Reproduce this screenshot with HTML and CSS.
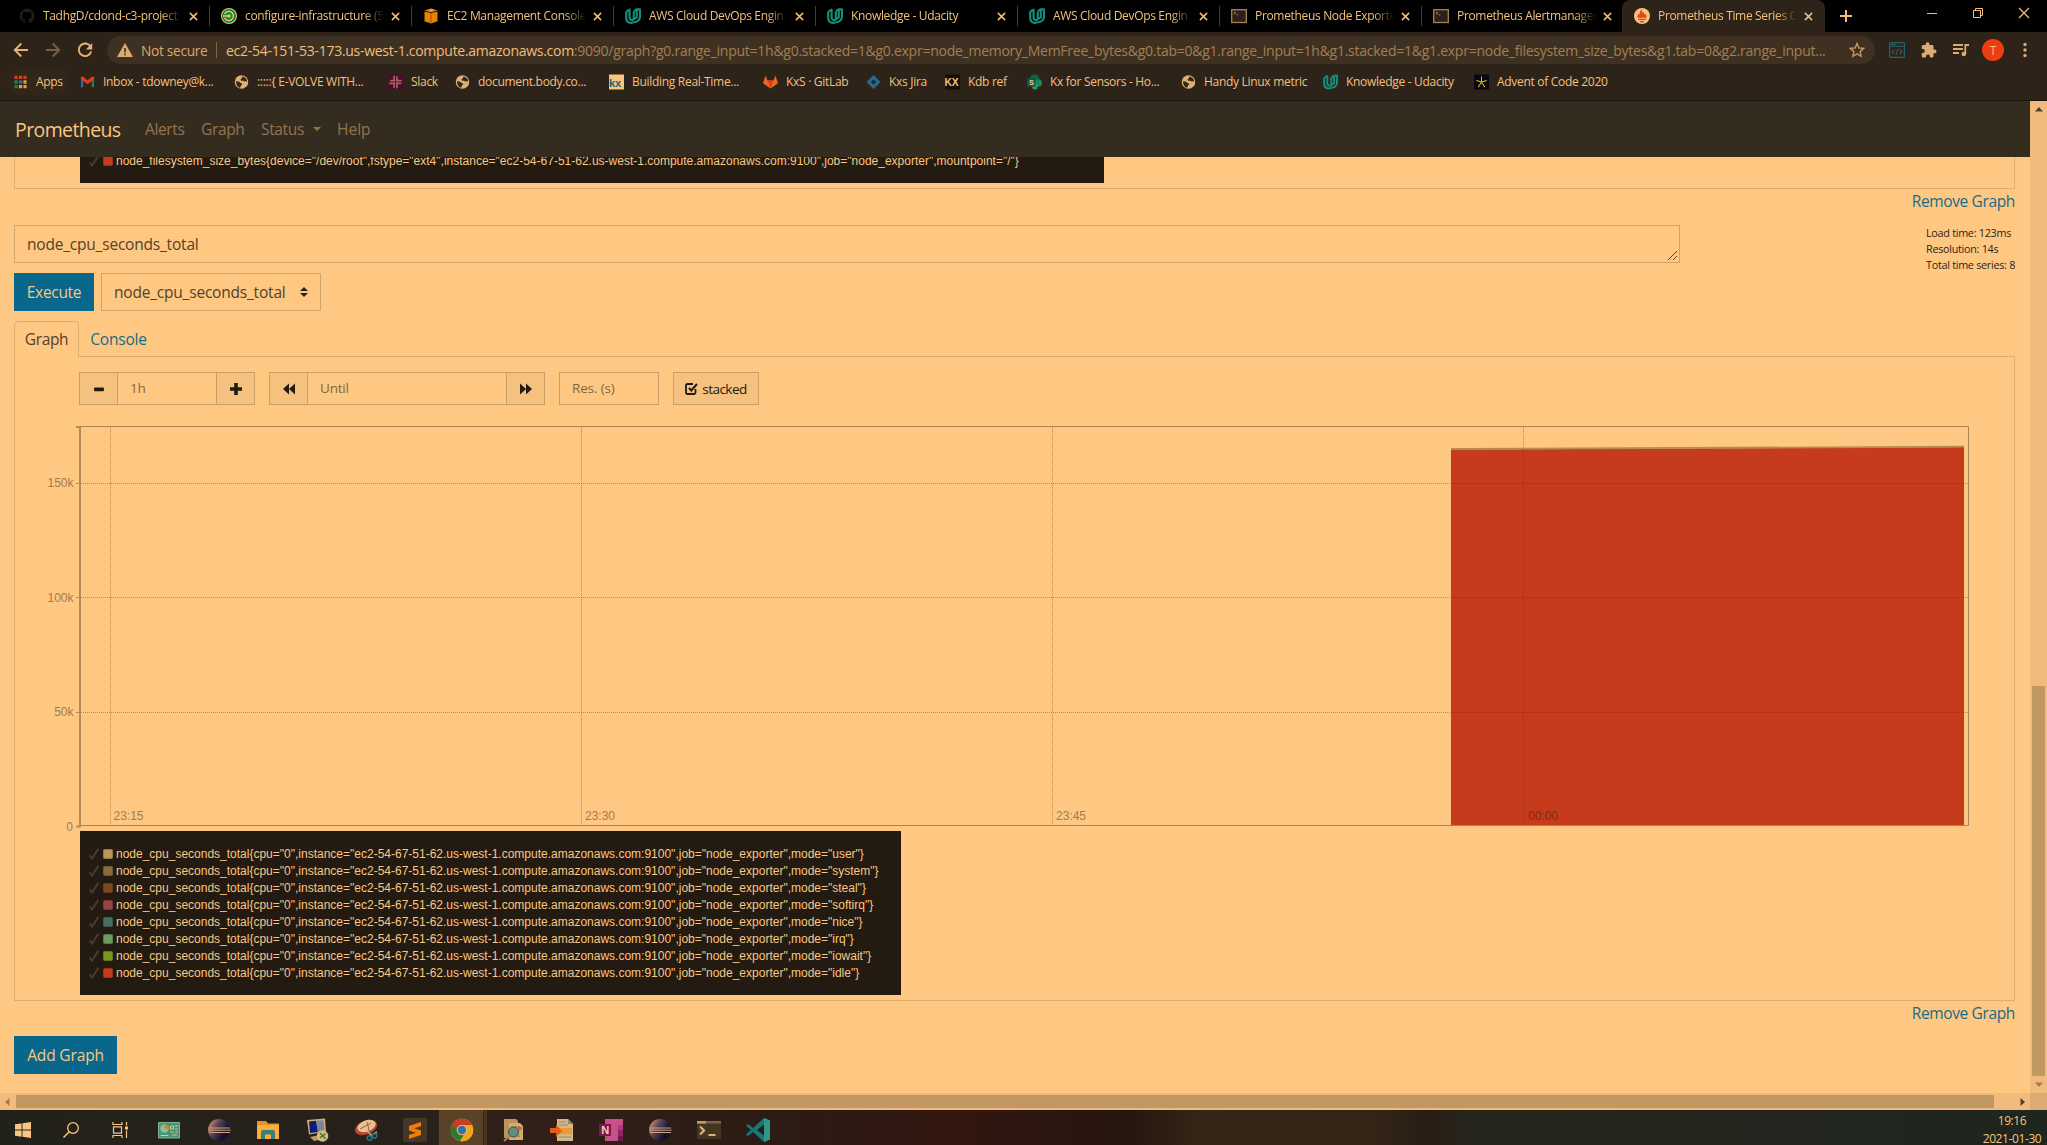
FILE: index.html
```html
<!DOCTYPE html>
<html lang="en">
<head>
<meta charset="utf-8">
<title>Prometheus Time Series Collection and Processing Server</title>
<link rel="stylesheet" href="styles.css">
</head>
<body>
<svg class="defs" width="0" height="0" aria-hidden="true">
  <symbol id="udacity" viewBox="0 0 16 16"><g fill="none" stroke="#11917c" stroke-width="2.1" stroke-linejoin="round"><path d="M1.2 3.6 4.6 1.6V9.6c0 3 3.4 3 4.4 1.4"/><path d="M1.2 3.6V10c0 4.400 4 5.800 7.200 4.200"/><path d="M8.800 3.600 11.200 1.400H15V8.400c0 3.600-3 6-6.600 5.800"/><path d="M8.800 3.400V11l3-1.600V2"/></g></symbol>
  <symbol id="globe" viewBox="0 0 16 16"><circle cx="8" cy="8" r="7.200" fill="#e0b073"/><path d="M2.200 6.800c1.600.9 3.200.2 4.200 1.600.5.900 2.200.5 2.300 1.800.1 1.100-1.400 1.300-1.600 2.300-.1.700-.4 1.400-.9 1.600C3.600 13.200 1.800 10.300 2.200 6.800zM8.200 2.200c.9.3 1 .9.300 1.600-.8.700-1.700.6-1.400 1.700.4 1 1.900.2 2.600 1.100.6.800 1.600.9 2.500.7.900-.1 1.500.3 1.700.9.200-3.600-2.300-6-5.700-6z" fill="#33271b"/></symbol>
  <symbol id="close" viewBox="0 0 10 10"><path d="M1 1l8 8M9 1L1 9" fill="none" stroke="#f0bd7b" stroke-width="1.700"/></symbol>
  <symbol id="term" viewBox="0 0 16 16"><rect x=".7" y="1.700" width="14.600" height="12.800" fill="#2b2118" stroke="#a78355" stroke-width="1.300"/><path d="M3 4l1.800 1L3 6M5.400 6.800h2" fill="none" stroke="#a78355" stroke-width=".9"/></symbol>
  <symbol id="check" viewBox="0 0 10 12"><path d="M.5 7.300 3 10.600 9.400.8" fill="none" stroke="#4b3b27" stroke-width="2"/></symbol>
  <symbol id="eclipse" viewBox="0 0 24 24"><defs><linearGradient id="ecl" x1="0" y1=".2" x2="1" y2=".8"><stop offset="0" stop-color="#d79365"/><stop offset=".35" stop-color="#59425a"/><stop offset=".75" stop-color="#15102e"/></linearGradient></defs><circle cx="12" cy="12" r="11" fill="url(#ecl)"/><path d="M2 10h21M1.500 12.200h22M2 14.500h21" stroke="#cfa783" stroke-width="1"/></symbol>
</svg>

<header class="chrome">
  <div class="tabs">
    <div class="tab"><svg class="fav" viewBox="0 0 16 16"><path d="M8 .6a7.400 7.400 0 0 0-2.300 14.400c.4.100.5-.2.500-.4v-1.400c-2 .4-2.500-.9-2.700-1.300-.2-.5-.6-.8-.9-1 .7-.3 1.300.1 1.700.7.500.8 1.200.7 1.900.5.1-.5.300-.8.500-1-1.700-.2-3.400-.9-3.400-3.600 0-.8.300-1.400.8-1.900-.1-.5-.3-1.200.1-2 .7-.1 1.500.4 2 .8 1.200-.3 2.400-.3 3.600 0 .6-.4 1.300-.8 2-.8.300.8.200 1.500.1 2 .5.500.8 1.200.8 1.900 0 2.700-1.700 3.400-3.400 3.600.3.300.5.7.5 1.400v2.100c0 .2.200.5.600.4A7.400 7.400 0 0 0 8 .6z" fill="#211d18"/></svg><span class="ttl">TadhgD/cdond-c3-project</span><svg class="x"><use href="#close"/></svg></div>
    <div class="tab"><svg class="fav" viewBox="0 0 16 16"><circle cx="8" cy="8" r="8" fill="#e9c07f"/><circle cx="8" cy="8" r="7" fill="#16872f"/><path d="M3.600 6.200A4.600 4.600 0 1 1 3.600 9.800M2 8h6" fill="none" stroke="#e9c07f" stroke-width="1.400"/><circle cx="8" cy="8" r="1.700" fill="#e9c07f"/></svg><span class="ttl">configure-infrastructure (5</span><svg class="x"><use href="#close"/></svg></div>
    <div class="tab"><svg class="fav" viewBox="0 0 16 16"><path d="M1.500 3.500 8 5v10.500L1.500 13.300zM14.500 3.500 8 5v10.500l6.500-2.200z" fill="#ea8206"/><path d="M1.500 2.600 8 .4l6.500 2.200L8 4.200z" fill="#ef9722"/><path d="M8 5v10.500M4.600 1.500v3M11.400 1.500v3" stroke="#8d4804" stroke-width=".8"/></svg><span class="ttl">EC2 Management Console</span><svg class="x"><use href="#close"/></svg></div>
    <div class="tab"><svg class="fav"><use href="#udacity"/></svg><span class="ttl">AWS Cloud DevOps Engin</span><svg class="x"><use href="#close"/></svg></div>
    <div class="tab"><svg class="fav"><use href="#udacity"/></svg><span class="ttl">Knowledge - Udacity</span><svg class="x"><use href="#close"/></svg></div>
    <div class="tab"><svg class="fav"><use href="#udacity"/></svg><span class="ttl">AWS Cloud DevOps Engin</span><svg class="x"><use href="#close"/></svg></div>
    <div class="tab"><svg class="fav"><use href="#term"/></svg><span class="ttl">Prometheus Node Exporte</span><svg class="x"><use href="#close"/></svg></div>
    <div class="tab last"><svg class="fav"><use href="#term"/></svg><span class="ttl">Prometheus Alertmanager</span><svg class="x"><use href="#close"/></svg></div>
    <div class="tab active"><svg class="fav" viewBox="0 0 16 16"><circle cx="8" cy="8" r="8" fill="#f7c17d"/><path d="M3.600 9.800C3 8 4 6.600 4.500 5.500c.3 1 .7 1.300 1 1.300C5.200 4.500 6.600 4 7 1.300c1.500 1 1.500 3.500 1.800 4.200.3-.5.400-1 .4-1.700 1.400 1.400 1 2.600 1.600 3.100.4-.3.500-.7.500-1.200 1 1.500 1.600 2.600 1 4.100zM4 10.800h8v1.200H4zM5.700 13h4.600c-.6 1.300-1.300 1.500-2.300 1.500s-1.700-.3-2.300-1.500z" fill="#e3441b"/></svg><span class="ttl">Prometheus Time Series C</span><svg class="x"><use href="#close"/></svg></div>
    <svg class="plus" viewBox="0 0 12 12"><path d="M6 0v12M0 6h12" stroke="#f3c07d" stroke-width="2"/></svg>
    <div class="win">
      <svg viewBox="0 0 12 12"><path d="M1 6.500h10" stroke="#f3c07d"/></svg>
      <svg viewBox="0 0 12 12"><path d="M1.500 3.500h7v7h-7zM3.500 3.500v-2h7v7h-2" fill="none" stroke="#f3c07d"/></svg>
      <svg viewBox="0 0 12 12"><path d="M1 1l10 10M11 1L1 11" stroke="#f3c07d" stroke-width="1.200"/></svg>
    </div>
  </div>

  <div class="toolbar">
    <svg class="nav" viewBox="0 0 16 16"><path d="M15 8H2M8.300 1.500 1.800 8l6.500 6.500" fill="none" stroke="#e5b577" stroke-width="1.900"/></svg>
    <svg class="nav" viewBox="0 0 16 16"><path d="M1 8h13M7.700 1.500 14.200 8l-6.500 6.500" fill="none" stroke="#77603f" stroke-width="1.900"/></svg>
    <svg class="nav" viewBox="0 0 16 16"><path d="M13.600 4.600A6.300 6.300 0 1 0 14.200 9.500" fill="none" stroke="#e5b577" stroke-width="1.900"/><path d="M15.200 1v6.400H8.900z" fill="#e5b577"/></svg>
    <div class="omni">
      <svg class="warn" viewBox="0 0 16 14"><path d="M8 0l8 14H0z" fill="#dcab6f"/><path d="M8 5v4.500M8 10.600v1.600" stroke="#3f3122" stroke-width="1.600"/></svg>
      <span class="secure">Not secure</span><i class="bar"></i>
      <span class="url"><b>ec2-54-151-53-173.us-west-1.compute.amazonaws.com</b>:9090/graph?g0.range_input=1h&amp;g0.stacked=1&amp;g0.expr=node_memory_MemFree_bytes&amp;g0.tab=0&amp;g1.range_input=1h&amp;g1.stacked=1&amp;g1.expr=node_filesystem_size_bytes&amp;g1.tab=0&amp;g2.range_input...</span>
      <svg class="star" viewBox="0 0 16 16"><path d="M8 1.500l1.900 4.500 4.900.4-3.700 3.200 1.100 4.800L8 11.900l-4.200 2.500 1.100-4.800L1.200 6.400l4.900-.4z" fill="none" stroke="#c2965f" stroke-width="1.400"/></svg>
    </div>
    <div class="exts">
      <svg viewBox="0 0 16 16"><rect x=".6" y=".6" width="14.800" height="14.800" rx="1" fill="none" stroke="#20636c" stroke-width="1.200"/><path d="M1 4.300h14M2 2.500h5M5.500 7.500 3 9.700 5.500 12M10.500 7.500 13 9.700 10.500 12M9 7l-2 5.500" fill="none" stroke="#20636c" stroke-width="1.100"/></svg>
      <svg viewBox="0 0 16 16"><path d="M13.600 7.500H12.500V4.400c0-.8-.6-1.400-1.400-1.400H8.500V2.200a1.900 1.900 0 0 0-3.800 0V3H2.100C1.300 3 .8 3.600.8 4.400V7h1a2 2 0 0 1 0 4h-1v3c0 .8.600 1.400 1.300 1.400H5v-1a2 2 0 0 1 4 0v1h2.200c.7 0 1.300-.6 1.300-1.400v-2.700h1.100a1.900 1.900 0 0 0 0-3.800z" fill="#dcab6f"/></svg>
      <svg viewBox="0 0 16 16"><path d="M0 3h10M0 7h10M0 11h6" stroke="#dcab6f" stroke-width="1.800"/><path d="M12.300 12V3H16" fill="none" stroke="#dcab6f" stroke-width="1.800"/><circle cx="10.800" cy="12" r="2.300" fill="#dcab6f"/></svg>
      <span class="avatar">T</span>
      <svg viewBox="0 0 16 16"><g fill="#dcab6f"><circle cx="8" cy="2.500" r="1.700"/><circle cx="8" cy="8" r="1.700"/><circle cx="8" cy="13.500" r="1.700"/></g></svg>
    </div>
  </div>

  <nav class="marks">
    <a class="apps"><svg viewBox="0 0 16 16"><path d="M1.500 3h13" stroke="#dd3a1d" stroke-width="3.500" stroke-dasharray="3.500 1.300"/><path d="M1.500 8h3.500M1.500 13h3.500" stroke="#26803d" stroke-width="3.500"/><path d="M6.300 8h3.500" stroke="#2d6f99" stroke-width="3.500"/><path d="M11.100 8h3.400M6.300 13h8.200" stroke="#e0a02c" stroke-width="3.500" stroke-dasharray="3.500 1.300"/></svg><span>Apps</span></a>
    <a style="width:154px"><svg viewBox="0 0 16 16"><path d="M1 3.500 3.500 5v8.500H1z" fill="#2c6ba6"/><path d="M15 3.500 12.500 5v8.500H15z" fill="#248240"/><path d="M1 5V2.700L3 2l5 4.500L13 2l2 .7V5L8 10.300z" fill="#e53a1f"/></svg><span>Inbox - tdowney@k...</span></a>
    <a style="width:154px"><svg><use href="#globe"/></svg><span>:::::{ E-VOLVE WITH...</span></a>
    <a style="width:67px"><svg viewBox="0 0 16 16"><path fill="#470f2d" d="M0 0h16v16H0z"/><path d="M6.500 2v5M9.500 9v5M2 9.500h5M9 6.500h5M9.500 2.500v3M6.500 10.500v3M3 6.500h3M10.500 9.500h3" stroke="#a8615b" stroke-width="1.800" stroke-linecap="round"/></svg><span>Slack</span></a>
    <a style="width:154px"><svg><use href="#globe"/></svg><span>document.body.co...</span></a>
    <a style="width:154px"><svg viewBox="0 0 16 16"><path fill="#f8c37e" d="M0 0h16v16H0z"/><text x="0" y="13" class="kx" fill="#1d6670">kx</text></svg><span>Building Real-Time...</span></a>
    <a style="width:103px"><svg viewBox="0 0 16 16"><path d="M8 15 0 9.300 2.800 1l2 5.500h6.400l2-5.500L16 9.300z" fill="#e86a20"/><path d="M8 15 4.800 6.500h6.400z" fill="#db3d1c"/></svg><span>KxS · GitLab</span></a>
    <a style="width:79px"><svg viewBox="0 0 16 16"><path d="M8 .5 15.500 8 8 15.500.5 8z" fill="#246b8d"/><path d="M8 5.200 10.800 8 8 10.800 5.200 8z" fill="#2e2419"/></svg><span>Kxs Jira</span></a>
    <a style="width:82px"><svg viewBox="0 0 16 16"><path fill="#150e09" d="M0 0h16v16H0z"/><text x="-.5" y="12" class="kx cap" fill="#eec083">KX</text></svg><span>Kdb ref</span></a>
    <a style="width:154px"><svg viewBox="0 0 16 16"><circle cx="8" cy="5" r="5" fill="#08674a"/><circle cx="12" cy="9" r="4" fill="#168762"/><circle cx="8.500" cy="13" r="3" fill="#279b70"/><path fill="#075a43" d="M0 4h9v9H0z"/><text x="2" y="11.500" class="sp" fill="#f3c585">S</text></svg><span>Kx for Sensors - Ho...</span></a>
    <a style="width:142px"><svg><use href="#globe"/></svg><span>Handy Linux metric</span></a>
    <a style="width:151px"><svg><use href="#udacity"/></svg><span>Knowledge - Udacity</span></a>
    <a><svg viewBox="0 0 16 16"><path fill="#070910" d="M0 0h16v16H0z"/><path d="M8 2v6M2.500 6.300 8 8l5.500-1.700M4.500 13.500 8 8l3.500 5.500" fill="none" stroke="#e7b61d" stroke-width="1.100"/></svg><span>Advent of Code 2020</span></a>
  </nav>
</header>

<div class="view">
  <div class="page">
    <nav class="navbar"><span class="brand">Prometheus</span><span class="n1">Alerts</span><span class="n2">Graph</span><span class="n3">Status</span><i class="caret"></i><span class="n4">Help</span></nav>

    <section class="prev"><div class="legend one"><div class="row"><svg class="ck"><use href="#check"/></svg><i class="sw" style="background:#c53b1c"></i><span>node_filesystem_size_bytes{device="/dev/root",fstype="ext4",instance="ec2-54-67-51-62.us-west-1.compute.amazonaws.com:9100",job="node_exporter",mountpoint="/"}</span></div></div></section>
    <div class="remove"><a>Remove Graph</a></div>

    <div class="query">
      <div class="expr">node_cpu_seconds_total<svg class="grip" viewBox="0 0 9 9"><path d="M0 9 9 0M5 9l4-4" stroke="#5b472d"/></svg></div>
      <div class="stats"><span>Load time: 123ms</span><span>Resolution: 14s</span><span>Total time series: 8</span></div>
    </div>
    <div class="run"><span class="btn exec">Execute</span><span class="select"><span>node_cpu_seconds_total</span><svg viewBox="0 0 8 10"><path d="M4 0l4 4H0zM4 10 0 6h8z" fill="#2e2519"/></svg></span></div>

    <div class="navtabs"><span class="on">Graph</span><span class="off">Console</span></div>
    <section class="panel">
      <div class="controls">
        <div class="grp"><span class="cb"><svg viewBox="0 0 12 12"><rect x="1" y="4.500" width="10" height="3.700" rx="1" fill="#211c12"/></svg></span><span class="in w98">1h</span><span class="cb"><svg viewBox="0 0 12 12"><path d="M6 0v12M0 6h12" stroke="#211c12" stroke-width="3.600"/></svg></span></div>
        <div class="grp"><span class="cb"><svg viewBox="0 0 12 12"><path d="M6 .5v11L0 6zM12 .5v11L6 6z" fill="#211c12"/></svg></span><span class="in w198">Until</span><span class="cb"><svg viewBox="0 0 12 12"><path d="M0 .5v11L6 6zM6 .5v11L12 6z" fill="#211c12"/></svg></span></div>
        <span class="res">Res. (s)</span>
        <span class="stk"><svg viewBox="0 0 13 13"><path d="M10.500 7v3.500q0 1.500-1.500 1.500H2.500Q1 12 1 10.500v-7Q1 2 2.500 2H8" fill="none" stroke="#211c12" stroke-width="1.800"/><path d="M4 6l2.300 2.500L12 2" fill="none" stroke="#211c12" stroke-width="2"/></svg>stacked</span>
      </div>
      <svg class="chart" width="1960" height="410" viewBox="15 421 1960 410">
        <path d="M1451 449.500 1964 447V825H1451z" fill="#c53b1c"/>
        <path d="M1451 449 1964 446.700" stroke="#b58d50" stroke-width="1.800"/>
        <g stroke="#4a2d12" stroke-opacity=".38" stroke-dasharray="1 1" fill="none"><path d="M110.500 427V825M581.500 427V825M1052.500 427V825M1523.500 427V825M81 483.500H1968M81 597.500H1968M81 712.500H1968"/></g>
        <path d="M80 426.500H1968.500V825.500H80" fill="none" stroke="#a98457"/>
        <path d="M76 427H80V826.500H76" fill="none" stroke="#b48c5a" stroke-width="2"/>
        <path d="M76 483.500h4M76 597.500h4M76 712.500h4" stroke="#b48c5a"/>
        <g class="ax" text-anchor="end"><text x="73.500" y="487">150k</text><text x="73.500" y="602">100k</text><text x="73.500" y="716">50k</text><text x="73" y="831">0</text></g>
        <g class="ax"><text x="113.500" y="820">23:15</text><text x="585" y="820">23:30</text><text x="1056" y="820">23:45</text><text x="1528" y="820" class="dk">00:00</text></g>
      </svg>
      <div class="legend two">
        <div class="row"><svg class="ck"><use href="#check"/></svg><i class="sw" style="background:#bf9559"></i><span>node_cpu_seconds_total{cpu="0",instance="ec2-54-67-51-62.us-west-1.compute.amazonaws.com:9100",job="node_exporter",mode="user"}</span></div>
        <div class="row"><svg class="ck"><use href="#check"/></svg><i class="sw" style="background:#8a6c3a"></i><span>node_cpu_seconds_total{cpu="0",instance="ec2-54-67-51-62.us-west-1.compute.amazonaws.com:9100",job="node_exporter",mode="system"}</span></div>
        <div class="row"><svg class="ck"><use href="#check"/></svg><i class="sw" style="background:#7c4a20"></i><span>node_cpu_seconds_total{cpu="0",instance="ec2-54-67-51-62.us-west-1.compute.amazonaws.com:9100",job="node_exporter",mode="steal"}</span></div>
        <div class="row"><svg class="ck"><use href="#check"/></svg><i class="sw" style="background:#994345"></i><span>node_cpu_seconds_total{cpu="0",instance="ec2-54-67-51-62.us-west-1.compute.amazonaws.com:9100",job="node_exporter",mode="softirq"}</span></div>
        <div class="row"><svg class="ck"><use href="#check"/></svg><i class="sw" style="background:#4a6d61"></i><span>node_cpu_seconds_total{cpu="0",instance="ec2-54-67-51-62.us-west-1.compute.amazonaws.com:9100",job="node_exporter",mode="nice"}</span></div>
        <div class="row"><svg class="ck"><use href="#check"/></svg><i class="sw" style="background:#6a9a5c"></i><span>node_cpu_seconds_total{cpu="0",instance="ec2-54-67-51-62.us-west-1.compute.amazonaws.com:9100",job="node_exporter",mode="irq"}</span></div>
        <div class="row"><svg class="ck"><use href="#check"/></svg><i class="sw" style="background:#75991c"></i><span>node_cpu_seconds_total{cpu="0",instance="ec2-54-67-51-62.us-west-1.compute.amazonaws.com:9100",job="node_exporter",mode="iowait"}</span></div>
        <div class="row"><svg class="ck"><use href="#check"/></svg><i class="sw" style="background:#c53b1c"></i><span>node_cpu_seconds_total{cpu="0",instance="ec2-54-67-51-62.us-west-1.compute.amazonaws.com:9100",job="node_exporter",mode="idle"}</span></div>
      </div>
    </section>
    <div class="remove"><a>Remove Graph</a></div>
    <div class="add"><span class="btn">Add Graph</span></div>
  </div>
  <div class="vbar"><svg viewBox="0 0 8 5"><path d="M4 0l4 4.500H0z" fill="#50402a"/></svg><i></i><svg viewBox="0 0 8 5"><path d="M4 5 0 .5h8z" fill="#a27d50"/></svg></div>
  <div class="hbar"><svg viewBox="0 0 5 8"><path d="M0 4l4.500-4v8z" fill="#a27d50"/></svg><i></i><svg viewBox="0 0 5 8"><path d="M5 4 .5 0v8z" fill="#50402a"/></svg></div>
  <div class="corner"></div>
</div>

<footer class="taskbar">
  <span><svg class="s16" viewBox="0 0 16 16"><path d="M0 2.300 6.600 1.400v6.200H0zM7.500 1.200 16 0v7.600H7.500zM0 8.500h6.600v6.200L0 13.700zM7.500 8.500H16V16l-8.500-1.200z" fill="#fbc681"/></svg></span>
  <span><svg class="s16" viewBox="0 0 16 16"><circle cx="10" cy="6" r="5.300" fill="none" stroke="#fbc681" stroke-width="1.300"/><path d="M6.200 9.800.5 15.500" stroke="#fbc681" stroke-width="1.500"/></svg></span>
  <span><svg class="s16" viewBox="0 0 16 16"><path d="M1 0v2.500h9V0M1 16v-2.500h9V16M1.500 4.800h8v6.400h-8zM14.500 0v3.500M14.500 8.500V16" fill="none" stroke="#fbc681" stroke-width="1.200"/><path d="M13 4.500h3v3h-3z" fill="#fbc681"/></svg></span>
  <span class="c51"><svg viewBox="0 0 24 24"><path d="M1.500 4.500h21v15.500h-21z" fill="#479379" stroke="#7bb48c"/><circle cx="7.500" cy="10.500" r="4.200" fill="#8ac09a"/><path d="M7.500 10.500V6.300a4.200 4.200 0 0 1 4 5z" fill="#d98424"/><path d="M3.500 17.500h8M13.500 8h3v3h-3zM13.500 14h3M18 8h3M18 11h3M18 14h3M15 17h5" stroke="#e5c47c" fill="none"/></svg></span>
  <span><svg><use href="#eclipse"/></svg></span>
  <span><svg viewBox="0 0 24 24"><path d="M1 3h9l2 2.500h11V21H1z" fill="#e79425"/><path d="M1 7h22v14H1z" fill="#fbae3b"/><path d="M5 21v-7q0-2 2-2h10q2 0 2 2v7h-4v-4.500H9V21z" fill="#388078"/></svg></span>
  <span><svg viewBox="0 0 24 24"><path d="M2 2l18-1.500 1 13-17 3z" fill="#d5ad76"/><path d="M4 3.500l7-.7L13 14l-8 1z" fill="#0b1d78"/><path d="M11 2.800l7.500-.6 1 10.300-6.500 1.500z" fill="#7a85a0"/><path d="M5 19l10-2 3 4-9 2z" fill="#c29b68"/><circle cx="17.500" cy="18" r="5.800" fill="#d4bd83"/><path d="M15 15l2.500 2.500L15 20M20.500 15.500 18 18l2.500 3" stroke="#467b35" stroke-width="1.500" fill="none"/></svg></span>
  <span><svg viewBox="0 0 24 24"><ellipse cx="12" cy="9.500" rx="11.500" ry="7" fill="#b64331" transform="rotate(-20 12 9.500)"/><ellipse cx="12.500" cy="8" rx="9.500" ry="5.600" fill="#eac08c" transform="rotate(-20 12.500 8)"/><path d="M6 11l11-6M13 4l3 12" stroke="#85674b"/><path d="M13 13l4 4M23 14l-7 4" stroke="#c8a77b" stroke-width="1.500"/><circle cx="15.500" cy="20" r="2.300" fill="none" stroke="#1c7680" stroke-width="1.600"/><circle cx="20.500" cy="17.800" r="2.300" fill="none" stroke="#1c7680" stroke-width="1.600"/></svg></span>
  <span><svg viewBox="0 0 24 24"><rect width="24" height="24" rx="1.500" fill="#45362a"/><path d="M18 4 6 8v4.500l7 2.300L6 17v4l12-4v-4.400l-7-2.300 7-2z" fill="#f57b05"/></svg></span>
  <span class="cur"><svg viewBox="0 0 24 24"><circle cx="12" cy="12" r="11.200" fill="#f0a51f"/><path d="M12 12 2.300 6.400A11.200 11.200 0 0 0 10 23z" fill="#257c30"/><path d="M12 12 6 20l4 3 6-9z" fill="#257c30"/><path d="M2.300 6.400A11.200 11.200 0 0 1 22 7H12L7.500 13z" fill="#ca3a25"/><path d="M12 7h10a11.200 11.200 0 0 1-12 16l6-9z" fill="#f0a51f"/><circle cx="12" cy="12" r="5.300" fill="#e8b981"/><circle cx="12" cy="12" r="4.200" fill="#32729b"/></svg></span>
  <span><svg viewBox="0 0 24 24"><path d="M3 1h12l2 2v17H3z" fill="#bd935b"/><path d="M8 5h11l3 3v14H8z" fill="#d6ac6c"/><path d="M10 9h9M10 12h10M10 18h9" stroke="#8b6b43"/><path d="M17 10h4" stroke="#c9482b" stroke-width="1.500"/><circle cx="12.500" cy="14" r="5" fill="#668c7c" stroke="#36544d"/><path d="M9 18l-6 5" stroke="#a98559" stroke-width="2"/></svg></span>
  <span><svg viewBox="0 0 24 24"><path d="M7 1h11l5 5v17H7z" fill="#d6b682"/><path d="M18 1v5h5" fill="#8f886b"/><path d="M9 4h7M9 7h9M9 19h12" stroke="#87907b"/><path d="M7 10h15v6H7z" fill="#ee9630"/><path d="M0 10h6V6.500L12 13l-6 6v-4H0z" fill="#df5c1d"/></svg></span>
  <span><svg viewBox="0 0 24 24"><path d="M6 1h18v22H6z" fill="#c65189"/><path d="M19 7h5v5h-5z" fill="#ad3d78"/><path d="M19 12h5v5.500h-5z" fill="#912565"/><path d="M19 17.500h5V23h-5z" fill="#731654"/><path d="M0 6h12v12H0z" fill="#7c155c"/><text x="2.300" y="15.800" class="on1" fill="#f9d095">N</text></svg></span>
  <span><svg><use href="#eclipse"/></svg></span>
  <span><svg viewBox="0 0 24 24"><path d="M0 3h24v18H0z" fill="#443523"/><path d="M0 3h24v2.500H0z" fill="#80623e"/><path d="M0 3h9v2.500H0z" fill="#c69a61"/><path d="M3 8.500l4 4-4 4M11.500 17h7" fill="none" stroke="#dfb176" stroke-width="2.200"/></svg></span>
  <span><svg viewBox="0 0 24 24"><path d="M18 0l6 2.500v19L18 24 7 14l-5 4-2-1.500L5 12 0 7.500 2 6l5 4zM18 6.500 11 12l7 5.500z" fill="#15797a" fill-rule="evenodd"/><path d="M18 0l6 2.500v19L18 24z" fill="#30978a"/></svg></span>
  <div class="clock"><span>19:16</span><span>2021-01-30</span></div>
</footer>
</body>
</html>
```
FILE: styles.css
```css
* { box-sizing: border-box; }
body {
  margin: 0; width: 2047px; height: 1145px; overflow: hidden;
  display: flex; flex-direction: column;
  background: #ffc882; color: #53412a;
  font: 15.5px "Open Sans", "Noto Sans", sans-serif;
}
svg { display: block; flex: none; }
i { display: block; flex: none; }
.defs { position: absolute; }

/* Browser chrome */
.chrome { flex: none; height: 101px; background: #2e2319; border-bottom: 1px solid #1c150f; color: #f3c07d; font-size: 12px; letter-spacing: -.33px; }
.tabs { height: 32px; display: flex; align-items: center; background: #000; padding-left: 8px; }
.tab { width: 202px; height: 20px; padding: 0 9px 0 11px; display: flex; align-items: center; border-right: 1px solid #4b3a26; flex: none; white-space: nowrap; }
.tab.last { border-right-color: transparent; }
.tab.active { height: 32px; margin-left: -2px; padding-left: 12px; background: #2e2319; border: 0; border-radius: 8px 8px 0 0; width: 203px; }
.fav { width: 16px; height: 16px; margin-right: 8px; }
.ttl { width: 141px; overflow: hidden; margin-right: 5px; padding-bottom: 2px; -webkit-mask-image: linear-gradient(90deg, #000 118px, transparent 139px); mask-image: linear-gradient(90deg, #000 118px, transparent 139px); }
.x { width: 9px; height: 9px; }
.plus { width: 12px; height: 12px; margin-left: 15px; }
.win { margin-left: auto; display: flex; gap: 34px; padding: 0 17px 6px 0; }
.win svg { width: 12px; height: 12px; }
.toolbar { height: 36px; display: flex; align-items: center; padding-left: 13px; }
.nav { width: 16px; height: 16px; margin-right: 16px; }
.nav + .nav + .nav { margin-right: 14px; }
.omni { width: 1768px; height: 28px; border-radius: 14px; background: #3f3122; display: flex; align-items: center; padding: 0 10px; font-size: 14px; letter-spacing: -.3px; white-space: nowrap; }
.warn { width: 16px; height: 14px; margin-right: 8px; }
.secure { width: 75px; color: #d8a96d; font-size: 13.700px; }
.bar { width: 1px; height: 16px; background: #806541; margin-right: 9px; }
.url { color: #a27f52; width: 1623px; letter-spacing: -.256px; }
.url b { font-weight: 400; color: #f0bd7b; letter-spacing: -.28px; }
.star { width: 16px; height: 16px; }
.exts { display: flex; align-items: center; gap: 16px; margin-left: 14px; }
.exts svg { width: 16px; height: 16px; }
.avatar { width: 22px; height: 22px; margin: 0 -3px; border-radius: 50%; background: #ed3d11; display: flex; align-items: center; justify-content: center; }
.marks { height: 27px; display: flex; align-items: center; padding-left: 7px; letter-spacing: -.3px; }
.marks a { display: flex; align-items: center; gap: 8px; white-space: nowrap; flex: none; }
.marks svg { width: 15px; height: 16px; }
.marks .apps { width: 63px; height: 27px; margin-right: 10px; padding-left: 6px; border-radius: 14px; background: #30271a; }
.kx { font: bold 12px "Liberation Sans", sans-serif; }
.kx.cap { font-size: 11px; }
.sp { font: bold 8px "Liberation Sans", sans-serif; }
.on1 { font: bold 11px "Liberation Sans", sans-serif; letter-spacing: 0; }

/* Viewport with its scrollbars */
.view { height: 1009px; flex: none; display: grid; grid-template-columns: 2030px 17px; grid-template-rows: 992px 17px; }
.page { overflow: hidden; }
.vbar { background: #f1bb7d; display: flex; flex-direction: column; align-items: center; padding: 6px 0 6px; }
.vbar svg { width: 8px; height: 5px; }
.vbar i { width: 13px; height: 390px; margin: 574px 0 auto; background: #c19762; }
.hbar { background: #f1bb7d; display: flex; align-items: center; padding: 0 5px; }
.hbar svg { width: 5px; height: 8px; }
.hbar i { width: 1978px; height: 13px; margin: 0 auto 0 6px; background: #c19762; }
.corner { background: #ddab72; }

/* Prometheus page */
.navbar { height: 56px; background: #352c20; display: flex; align-items: center; padding-left: 15px; color: #94754b; letter-spacing: -.35px; }
.brand { font-size: 19.500px; color: #fbc681; width: 130px; letter-spacing: -.6px; }
.n1 { width: 56px; } .n2 { width: 60px; } .n3 { width: 52px; } .n4 { margin-left: 16px; letter-spacing: 0; }
.caret { border: 4.500px solid transparent; border-top-color: #94754b; border-bottom: 0; }
.prev { height: 32px; width: 2001px; margin-left: 14px; border: 1px solid #ddae72; border-top: 0; overflow: hidden; padding-left: 65px; }
.legend { background: #231b12; color: #fbc681; font: 12px "Liberation Sans", Arial, sans-serif; white-space: nowrap; }
.legend.one { width: 1024px; height: 26px; padding: 0 9px 14px; display: flex; align-items: flex-end; }
.legend.two { width: 821px; height: 164px; margin: 0 0 0 65px; padding: 14px 9px; }
.row { display: flex; align-items: center; height: 17px; flex: none; }
.ck { width: 10px; height: 12px; margin-right: 4px; }
.sw { width: 10px; height: 10px; border-radius: 2px; margin-right: 3px; box-shadow: inset 0 0 0 1px rgba(35, 27, 18, .25); }
.remove { height: 25px; width: 2015px; padding-bottom: 1px; display: flex; justify-content: flex-end; align-items: center; color: #156c89; letter-spacing: -.36px; }
.query { display: flex; margin: 11px 0 10px 14px; height: 38px; width: 2000px; justify-content: space-between; }
.expr { width: 1666px; border: 1px solid #cda46b; padding-left: 12px; display: flex; align-items: center; position: relative; }
.grip { position: absolute; right: 2px; bottom: 2px; width: 9px; height: 9px; }
.stats { display: flex; flex-direction: column; font-size: 10.800px; line-height: 16px; color: #2d2419; letter-spacing: -.28px; width: 88px; white-space: nowrap; }
.run { display: flex; gap: 7px; margin-left: 14px; height: 38px; }
.btn { display: flex; align-items: center; justify-content: center; height: 38px; background: #08678a; color: #fbc681; letter-spacing: -.15px; }
.exec { width: 80px; letter-spacing: -.3px; }
.select { width: 220px; border: 1px solid #cda46b; display: flex; align-items: center; justify-content: space-between; padding: 0 12px; }
.select svg { width: 8px; height: 10px; }
.expr, .select, .navtabs { letter-spacing: -.2px; }
.navtabs { margin: 10px 0 0 14px; height: 36px; display: flex; position: relative; z-index: 1; }
.navtabs span { display: flex; align-items: center; justify-content: center; padding-bottom: 1px; }
.on { width: 65px; border: 1px solid #ddae72; border-bottom: 0; border-radius: 4px 4px 0 0; background: #ffc882; letter-spacing: -.35px; }
.off { width: 79px; color: #156c89; }
.panel { width: 2001px; height: 645px; margin: -1px 0 0 14px; border: 1px solid #ddae72; padding-top: 15px; }
.controls { display: flex; gap: 14px; margin-left: 64px; height: 33px; font-size: 13.500px; }
.grp { display: flex; border: 1px solid #c99e67; }
.cb { width: 37px; display: flex; align-items: center; justify-content: center; background: #f5c17f; }
.cb svg { width: 12px; height: 12px; }
.in { border: solid #c99e67; border-width: 0 1px; padding-left: 12px; line-height: 30px; color: #816643; letter-spacing: -.2px; }
.w98 { width: 100px; } .w198 { width: 200px; }
.res { width: 100px; border: 1px solid #c99e67; padding-left: 12px; line-height: 30px; color: #816643; letter-spacing: -.15px; }
.stk { width: 86px; border: 1px solid #c99e67; background: #f5c17f; color: #211c12; display: flex; align-items: center; justify-content: center; gap: 4px; letter-spacing: -.55px; }
.stk svg { width: 13px; height: 13px; }
.chart { margin: 16px 0 0; }
.ax text { font: 12px "Liberation Sans", Arial, sans-serif; fill: #a07c50; }
.ax .dk { fill: #812c15; }
.add { margin: 10px 0 0 14px; }
.add .btn { width: 103px; }

/* Taskbar */
.taskbar { height: 35px; flex: none; display: flex; background: linear-gradient(90deg, #22221a 0, #28211a 400px, #30201a 500px, #2c1b13 800px, #321610 960px, #26150f 1130px, #342717 1200px, #342617 1370px, #291d15 1425px, #26251c 1470px, #1e261e 2047px); }
.taskbar > span { width: 49px; display: flex; align-items: center; justify-content: center; padding-top: 4px; flex: none; }
.taskbar > span:first-child { width: 46px; }
.taskbar > .c51 { width: 50px; }
.taskbar > .cur { width: 49px; padding-right: 3px; background: linear-gradient(90deg, #584329 44px, #34271d 44px, #34271d 45px, #49341f 45px, #49341f 48px, transparent 48px); }
.taskbar > span svg { width: 24px; height: 24px; }
.taskbar > span svg.s16 { width: 16px; height: 16px; }
.clock { margin-left: auto; width: 70px; display: flex; flex-direction: column; align-items: center; font-size: 12px; line-height: 18px; color: #f8c480; letter-spacing: -.4px; padding-top: 2px; white-space: nowrap; }
```
